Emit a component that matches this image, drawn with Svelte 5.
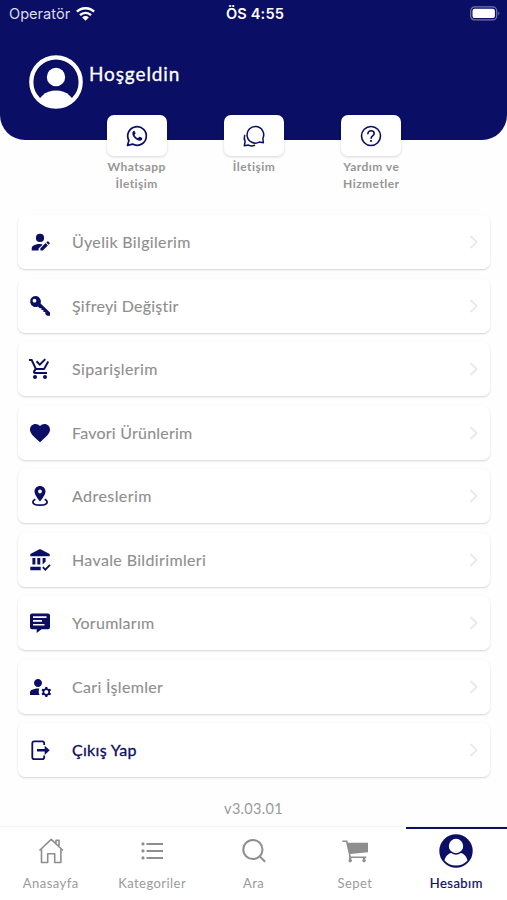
<script lang="ts">
	type IconType = {
		fill?: string;
		stroke?: string;
		cog?: boolean;
	};

	type RowType = {
		label: string;
		spacing: number;
		icon: IconType;
		accent?: boolean;
	};

	const rows: RowType[] = [
		{
			label: 'Üyelik Bilgilerim',
			spacing: 0.34,
			icon: {
				fill: 'M12 3.8a4.1 4.1 0 1 1 0 8.2a4.1 4.1 0 0 1 0-8.2zM3.7 20.5v-2c0-2.7 3.8-4.4 8.3-4.4q1.5 0 2.8.3L10.6 18.6v1.900zM12.4 20.6v-2.300l5.200-5.200 2.300 2.300-5.200 5.200zM18.300 12.400l1-1q.5-.4 1 0l1.300 1.300q.5.5 0 1l-1 1z'
			}
		},
		{
			label: 'Şifreyi Değiştir',
			spacing: 0.22,
			icon: {
				fill: 'M7.5 2a5.5 5.5 0 1 0 2.4 10.5l1.7 1.7h1.9v1.9h1.9v1.9h1.9v2l1.7 1.7h3v-3.2l-9.400-9.100A5.500 5.500 0 0 0 7.500 2zM6.500 4.800a1.900 1.900 0 1 1 0 3.800a1.900 1.900 0 0 1 0-3.800z'
			}
		},
		{
			label: 'Siparişlerim',
			spacing: 0.4,
			icon: {
				fill: 'M9 20c0 1.100-.9 2-2 2s-2-.9-2-2 .9-2 2-2 2 .9 2 2m8-2c-1.100 0-2 .9-2 2s.9 2 2 2 2-.9 2-2-.9-2-2-2m-9.800-3.200v-.1l.9-1.700h7.400c.7 0 1.400-.4 1.700-1l3.900-7-1.700-1-3.900 7h-7L4.300 2H1v2h2l3.600 7.600L5.200 14c-.1.3-.2.6-.2 1 0 1.100.9 2 2 2h12v-2H7.400c-.1 0-.2-.1-.2-.2M18 2.800l-1.400-1.400-4.800 4.800-2.600-2.600L7.800 5l4 4L18 2.800Z'
			}
		},
		{
			label: 'Favori Ürünlerim',
			spacing: 0.23,
			icon: {
				fill: 'M12 21.35l-1.45-1.32C5.4 15.36 2 12.27 2 8.5 2 5.41 4.42 3 7.5 3c1.74 0 3.41.81 4.5 2.08C13.09 3.81 14.76 3 16.5 3 19.58 3 22 5.41 22 8.5c0 3.77-3.4 6.86-8.55 11.53L12 21.35z'
			}
		},
		{
			label: 'Adreslerim',
			spacing: 0.43,
			icon: {
				fill: 'M12 2C8.800 2 6.500 4.400 6.500 7.600c0 3.800 5.500 9.900 5.500 9.900s5.500-6.100 5.500-9.900C17.500 4.400 15.200 2 12 2zM12 5.600a1.900 1.900 0 1 1 0 3.800a1.900 1.900 0 0 1 0-3.800z',
				stroke: 'M7.300 15.300C5.700 16 4.900 17 4.900 18c0 1.900 3.200 3.200 7.100 3.200s7.100-1.300 7.100-3.200c0-1-.8-2-2.400-2.700'
			}
		},
		{
			label: 'Havale Bildirimleri',
			spacing: 0.36,
			icon: {
				fill: 'M12 1L2.300 6v2.200h19.400V6zM4.400 10h3v6.500h-3zM9.300 10h3v6.500h-3zM14.600 10h3v3.600l-3 2.900zM2.300 18.700h10.400v3.600H2.300z',
				stroke: 'M14.800 19.200l2.500 2.500 4.700-4.900'
			}
		},
		{
			label: 'Yorumlarım',
			spacing: 0.27,
			icon: {
				fill: 'M4 2.500h16a2 2 0 0 1 2 2v11.700a2 2 0 0 1-2 2h-6.500L8.700 22v-3.800H4a2 2 0 0 1-2-2V4.500a2 2 0 0 1 2-2zM5 5.300v1.700h13.500V5.300zM5 9.100v1.700h9V9.100zM5 12.900v1.700h11.500v-1.700z'
			}
		},
		{
			label: 'Cari İşlemler',
			spacing: 0.32,
			icon: {
				fill: 'M10 12c2.210 0 4-1.790 4-4s-1.790-4-4-4-4 1.790-4 4 1.790 4 4 4zM11.300 13.600C10.900 13.500 10.450 13.500 10 13.500c-2.420 0-4.680.47-6.610 1.620C2.510 15.640 2 16.520 2 17.450V20h9.600c-.7-1.200-1-2.400-.9-3.500.1-1.100.2-2 .6-2.900z',
				cog: true
			}
		},
		{
			label: 'Çıkış Yap',
			spacing: 0.3,
			accent: true,
			icon: {
				fill: 'M16.700 7.700l5 4.600-5 4.600v-3.400H9v-2.400h7.700z',
				stroke: 'M16.200 7V5.300q0-1.900-1.900-1.900H6.200q-1.900 0-1.900 1.900v14q0 1.900 1.900 1.900h8.100q1.900 0 1.900-1.900v-1.700'
			}
		}
	];

	const cog =
		'M20.750 16c0-.22-.03-.42-.06-.63l1.140-1.010-1-1.730-1.450.49c-.32-.27-.68-.48-1.080-.63L18 11h-2l-.3 1.490c-.4.15-.76.36-1.080.63l-1.450-.49-1 1.730 1.140 1.010c-.03.21-.06.41-.06.63s.03.42.06.63l-1.140 1.010 1 1.730 1.450-.49c.32.27.68.48 1.080.63L16 21h2l.3-1.490c.4-.15.76-.36 1.080-.63l1.450.49 1-1.730-1.140-1.010c.03-.21.06-.41.06-.63zM17 18c-1.100 0-2-.9-2-2s.9-2 2-2 2 .9 2 2-.9 2-2 2z';
</script>

<div class="screen">
	<header class="header">
		<div class="status">
			<div class="carrier">
				<span>Operatör</span>
				<svg width="19" height="14" viewBox="0 0 19 14">
					<g fill="none" stroke="#fff" stroke-width="2.4">
						<path d="M.9 4.700a12.300 12.300 0 0 1 17.200 0" />
						<path d="M4 8.100a7.900 7.900 0 0 1 11 0" />
					</g>
					<path d="M6.200 10.400a4.700 4.700 0 0 1 6.600 0l-3.300 3.400z" fill="#fff" />
				</svg>
			</div>
			<div class="clock">ÖS 4:55</div>
			<div class="power">
				<svg width="31" height="15" viewBox="0 0 31 15">
					<rect x=".7" y=".9" width="26" height="13" rx="4" fill="none" stroke="#7577a8" stroke-width="1.2" />
					<rect x="2.5" y="2.7" width="22.4" height="9.4" rx="2.2" fill="#fff" />
					<path d="M28.400 5.300q2 2.100 0 4.200z" fill="#7577a8" />
				</svg>
			</div>
		</div>
		<div class="profile">
			<svg width="54" height="54" viewBox="0 0 54 54">
				<clipPath id="face"><circle cx="27" cy="27" r="25" /></clipPath>
				<g clip-path="url(#face)" fill="#fff">
					<circle cx="27" cy="22" r="9.2" />
					<ellipse cx="27" cy="53" rx="19.5" ry="17.5" />
				</g>
				<circle cx="27" cy="27" r="24.7" fill="none" stroke="#fff" stroke-width="4.2" />
			</svg>
			<span class="hello">Hoşgeldin</span>
		</div>
	</header>

	<div class="quick">
		<div class="quick-item">
			<div class="quick-card">
				<svg width="24" height="24" viewBox="0 0 24 24">
					<path d="M2.500 21.500l1.400-5a9.300 9.300 0 1 1 3.600 3.600z" fill="none" stroke="#0a0e64" stroke-width="1.7" stroke-linejoin="round" />
					<path d="M9 6.800c-.5 0-1.700 1-1.700 2.600 0 3.200 4.300 7.300 7.500 7.300 1.400 0 2.500-1 2.500-2.300 0-.5-2.400-1.700-2.900-1.600-.5.1-.9 1.400-1.500 1.300-1.300-.4-2.900-1.900-3.300-3.200 0-.5 1.100-1.100 1-1.600-.1-.5-.9-2.500-1.600-2.500z" fill="#0a0e64" />
				</svg>
			</div>
			<div class="quick-label">Whatsapp<br />İletişim</div>
		</div>
		<div class="quick-item">
			<div class="quick-card">
				<svg width="24" height="24" viewBox="0 0 24 24" fill="none" stroke="#0a0e64" stroke-width="1.5" stroke-linejoin="round" stroke-linecap="round">
					<path d="M21.300 18.800l-4-.7A8.300 8.300 0 1 1 20.900 14.300z" />
					<path d="M2.700 11.500c-.7 2-.5 4.200.4 6L2.300 21.800l4.200-.7c2 1 4.100 1 6 .2" />
				</svg>
			</div>
			<div class="quick-label">İletişim</div>
		</div>
		<div class="quick-item">
			<div class="quick-card">
				<svg width="24" height="24" viewBox="0 0 24 24" fill="none" stroke="#0a0e64" stroke-width="1.6">
					<circle cx="12" cy="12" r="9.5" />
					<path d="M8.900 9.700c0-1.900 1.400-3 3.200-3s3.100 1.100 3.100 2.800c0 2.300-3.100 2.400-3.100 4.700" stroke-linecap="round" />
					<circle cx="12" cy="17" r="1.1" fill="#0a0e64" stroke="none" />
				</svg>
			</div>
			<div class="quick-label">Yardım ve<br />Hizmetler</div>
		</div>
	</div>

	<div class="list">
		{#each rows as row}
			<div class="row" class:accent={row.accent}>
				<svg class="row-icon" width="24" height="24" viewBox="0 0 24 24">
					{#if row.icon.fill}
						<path d={row.icon.fill} fill="#0a0e64" fill-rule="evenodd" />
					{/if}
					{#if row.icon.stroke}
						<path d={row.icon.stroke} fill="none" stroke="#0a0e64" stroke-width="1.8" />
					{/if}
					{#if row.icon.cog}
						<path d={cog} fill="#0a0e64" transform="translate(1.3 1)" />
					{/if}
				</svg>
				<span class="row-label" style="letter-spacing: {row.spacing}px">{row.label}</span>
				<svg width="10" height="16" viewBox="0 0 10 16">
					<path d="M1.500 2L7.600 8l-6.100 6" fill="none" stroke="#e9e9e9" stroke-width="1.8" />
				</svg>
			</div>
		{/each}
	</div>

	<div class="version">v3.03.01</div>

	<nav class="tabs">
		<div class="tab">
			<svg width="34" height="34" viewBox="0 0 34 34" fill="none" stroke="#8e8e8e" stroke-width="1.6" stroke-linejoin="round">
				<path d="M5.500 16.500L17.200 5.300 29 16.500M7.500 15.200v13.300h6.200v-8.700h7v8.700h6.200V15.200M22 9.300V6.300h3v5.800" />
			</svg>
			<span>Anasayfa</span>
		</div>
		<div class="tab">
			<svg width="34" height="34" viewBox="0 0 34 34" fill="#8e8e8e">
				<path d="M11.500 8.900h16.500v2.100h-16.500zM11.500 15.900h16.500v2.100h-16.500zM11.500 22.900h16.500v2.100h-16.500z" />
				<circle cx="8" cy="9.900" r="1.6" />
				<circle cx="8" cy="16.900" r="1.6" />
				<circle cx="8" cy="23.900" r="1.6" />
			</svg>
			<span>Kategoriler</span>
		</div>
		<div class="tab">
			<svg width="34" height="34" viewBox="0 0 34 34" fill="none" stroke="#8e8e8e" stroke-width="2">
				<circle cx="15.900" cy="15.500" r="9.600" />
				<path d="M22.500 22.100l5.600 5.600" />
			</svg>
			<span>Ara</span>
		</div>
		<div class="tab">
			<svg width="34" height="34" viewBox="0 0 34 34" fill="#8e8e8e">
				<path d="M4.300 6.500h5l.7 2.200H30v9.600l-17.700 1.700.5 2.400h15.400v1.600h-1v1.300a1.700 1.700 0 1 1-2.300 0v-1.300H13.300v1.300a1.700 1.700 0 1 1-2.200 0V21.400L8 8H4.300z" />
			</svg>
			<span>Sepet</span>
		</div>
		<div class="tab active">
			<svg width="34" height="34" viewBox="0 0 34 34">
				<circle cx="17" cy="17" r="16.7" fill="#0a0e64" />
				<circle cx="17" cy="12" r="7.2" fill="#fff" />
				<path d="M5.500 26.500c1-4.500 4-6.800 6.600-7.400q4.900 3.300 9.800 0c2.600.6 5.600 2.900 6.600 7.400-2.700 3.100-6.500 5-11.500 5s-8.800-1.900-11.500-5z" fill="#fff" />
			</svg>
			<span>Hesabım</span>
		</div>
	</nav>
</div>

<style>
	:global(body) {
		background: #fff;
	}

	.screen {
		width: 507px;
		height: 900px;
		display: flex;
		flex-direction: column;
		overflow: hidden;
		background: #fefefe;
		font-family: Lato, 'Open Sans', sans-serif;
	}

	.header {
		height: 140px;
		flex: none;
		box-sizing: border-box;
		background: #0a0e64;
		border-radius: 0 0 25px 25px;
		color: #fff;
	}

	.status {
		display: grid;
		grid-template-columns: 1fr auto 1fr;
		align-items: center;
		height: 27px;
		padding: 0 6px 0 9px;
		font-family: Inter, sans-serif;
		font-size: 14.6px;
	}

	.carrier {
		display: flex;
		align-items: center;
		gap: 6px;
		color: #dcdcec;
	}

	.clock {
		font-weight: 600;
		letter-spacing: 0.15px;
	}

	.power {
		display: flex;
		justify-content: flex-end;
	}

	.profile {
		display: flex;
		padding: 28px 0 0 29px;
		gap: 6px;
	}

	.hello {
		padding-top: 7px;
		font-size: 19px;
		line-height: 24px;
		letter-spacing: 0.9px;
		-webkit-text-stroke: 0.3px #fff;
	}

	.quick {
		display: flex;
		justify-content: center;
		height: 100px;
		margin-top: -25px;
		padding-left: 1px;
		flex: none;
	}

	.quick-item {
		width: 117.3px;
		display: flex;
		flex-direction: column;
		align-items: center;
	}

	.quick-card {
		width: 60px;
		height: 41px;
		display: flex;
		align-items: center;
		justify-content: center;
		background: #fff;
		border-radius: 7px;
		box-shadow: 0 1px 3px rgba(0, 0, 0, 0.16);
	}

	.quick-label {
		margin-top: 3px;
		font-size: 12px;
		font-weight: 700;
		line-height: 16.5px;
		letter-spacing: 0.45px;
		text-align: center;
		color: #969696;
	}

	.list {
		display: flex;
		flex-direction: column;
		gap: 9.5px;
		padding: 0 17px 0 18px;
	}

	.row {
		display: flex;
		align-items: center;
		height: 54px;
		box-sizing: border-box;
		padding: 0 11px 0 10px;
		background: #fff;
		border-radius: 7px;
		box-shadow: 0 1px 2px rgba(0, 0, 0, 0.17);
	}

	.row-icon {
		margin-right: 20px;
	}

	.row-label {
		flex: 1;
		padding-bottom: 1px;
		font-size: 16px;
		color: #8e8e8e;
		-webkit-text-stroke: 0.1px currentColor;
	}

	.accent .row-label {
		color: #0a0e64;
		-webkit-text-stroke-width: 0.3px;
	}

	.version {
		margin-top: 21px;
		height: 29px;
		line-height: 22px;
		text-align: center;
		font-size: 14.5px;
		color: #9a9a9a;
		letter-spacing: 0.3px;
	}

	.tabs {
		display: flex;
		height: 73px;
		flex: none;
		box-shadow: 0 -1px 1px rgba(0, 0, 0, 0.04);
		background: #fff;
	}

	.tab {
		flex: 1;
		display: flex;
		flex-direction: column;
		align-items: center;
		border-top: 2px solid transparent;
		padding-top: 5px;
		font-size: 13px;
		letter-spacing: 0.45px;
		color: #9a9a9a;
	}

	.tab span {
		margin-top: 6px;
		line-height: 18px;
	}

	.active {
		border-top-color: #0a0e64;
		color: #0a0e64;
		-webkit-text-stroke: 0.2px #0a0e64;
	}
</style>
